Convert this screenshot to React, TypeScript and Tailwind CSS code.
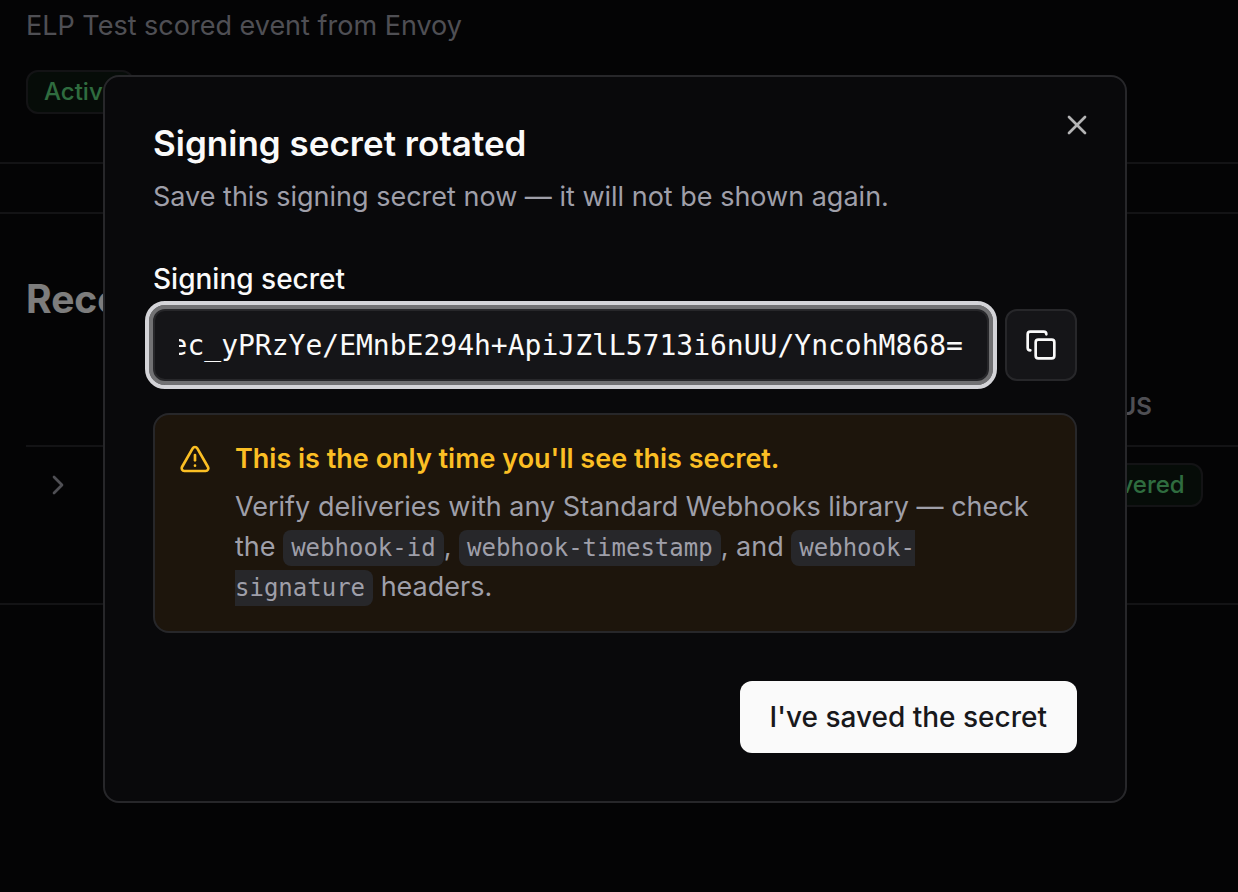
import { useEffect, useRef } from 'react';
import { ChevronRight, Copy, TriangleAlert, X } from 'lucide-react';

const SECRET = 'whsec_yPRzYe/EMnbE294h+ApiJZlL5713i6nUU/YncohM868=';

function Badge({ children }: { children: string }) {
  return (
    <span className="inline-flex h-11 items-center rounded-xl border-2 border-zinc-800 bg-[#0c1811] px-4 text-2xl font-medium text-[#5fd87f]">
      {children}
    </span>
  );
}

function Code({ children }: { children: string }) {
  return (
    <code className="rounded-lg bg-zinc-800 px-2 py-1 font-['DejaVu_Sans_Mono',monospace] text-2xl leading-none">
      {children}
    </code>
  );
}

function WebhookPage() {
  return (
    <main className="pt-1.5">
      <section className="flex flex-col items-start gap-6 border-b-2 border-zinc-800 px-[26px] pb-12">
        <p className="text-[27px] leading-10 text-[#9f9fa9]">ELP Test scored event from Envoy</p>
        <Badge>Active</Badge>
      </section>
      <div className="h-[50px] border-b-2 border-zinc-800" />

      {/* Deliveries */}
      <section className="border-b-2 border-zinc-800 pt-16 pl-[26px]">
        <h2 className="text-[39px] leading-[42px] font-bold">Recent deliveries</h2>
        <table className="mt-12 w-full text-left">
          <thead>
            <tr className="h-[78px] border-b-2 border-zinc-800 text-2xl text-[#9f9fa9]">
              <th aria-label="Expand" />
              <th className="w-[180px] font-semibold">STATUS</th>
            </tr>
          </thead>
          <tbody>
            <tr className="h-[77px]">
              <td>
                <button aria-label="Show delivery" className="ml-4 block text-[#9f9fa9]">
                  <ChevronRight size={32} />
                </button>
              </td>
              <td>
                <Badge>Delivered</Badge>
              </td>
            </tr>
          </tbody>
        </table>
        <div className="h-20" />
      </section>
    </main>
  );
}

function SecretDialog() {
  const inputRef = useRef<HTMLInputElement>(null);

  // Show the end of the secret, it is longer than the box
  useEffect(() => {
    const input = inputRef.current;
    if (!input) return;
    input.focus();
    input.setSelectionRange(SECRET.length, SECRET.length);
    input.scrollLeft = input.scrollWidth;
  }, []);

  return (
    <div
      role="dialog"
      aria-modal="true"
      aria-labelledby="dialog-title"
      className="relative w-full max-w-5xl rounded-2xl border-2 border-zinc-800 bg-[#09090b] p-12"
    >
      <button aria-label="Close" className="absolute top-8 right-8 text-[#b4b4b5]">
        <X size={32} />
      </button>

      <h1 id="dialog-title" className="text-[35px] leading-9 font-semibold">
        Signing secret rotated
      </h1>
      <p className="mt-4 text-[27px] leading-10 text-[#9f9fa9]">
        Save this signing secret now — it will not be shown again.
      </p>

      <label htmlFor="secret" className="mt-12 block text-[28px] leading-7 font-medium">
        Signing secret
      </label>
      <div className="mt-4 flex gap-4">
        <input
          id="secret"
          ref={inputRef}
          readOnly
          defaultValue={SECRET}
          className="h-18 min-w-0 flex-1 rounded-xl border-2 border-zinc-800 bg-[#151518] px-6 font-['DejaVu_Sans_Mono',monospace] text-[28px] focus:shadow-[0_0_0_4px_#717173] focus:outline-4 focus:outline-offset-4 focus:outline-zinc-300"
        />
        <button
          aria-label="Copy secret"
          className="flex size-18 items-center justify-center rounded-xl border-2 border-zinc-800 bg-[#151518]"
        >
          <Copy size={32} />
        </button>
      </div>

      <div role="alert" className="mt-8 flex gap-6 rounded-2xl border-2 border-zinc-800 bg-[#1d150c] p-6">
        <TriangleAlert size={32} className="mt-1 shrink-0 text-[#fbbf24]" />
        <div className="text-[27px] leading-10">
          <p className="font-semibold text-[#fbbf24]">This is the only time you'll see this secret.</p>
          <p className="mt-2 text-[#9f9fa9]">
            Verify deliveries with any Standard Webhooks library — check the <Code>webhook-id</Code>,{' '}
            <Code>webhook-timestamp</Code>, and <Code>webhook-signature</Code> headers.
          </p>
        </div>
      </div>

      <div className="mt-12 flex justify-end">
        <button className="h-18 rounded-xl bg-[#fafafa] px-[30px] text-[28px] font-medium text-[#18181b]">
          I've saved the secret
        </button>
      </div>
    </div>
  );
}

export default function App() {
  return (
    <div className="h-screen overflow-hidden bg-[#09090b] font-['Inter',sans-serif] text-[#fafafa]">
      <WebhookPage />
      <div className="fixed inset-0 flex items-start justify-center bg-black/50 pt-[75px] pr-2">
        <SecretDialog />
      </div>
    </div>
  );
}
